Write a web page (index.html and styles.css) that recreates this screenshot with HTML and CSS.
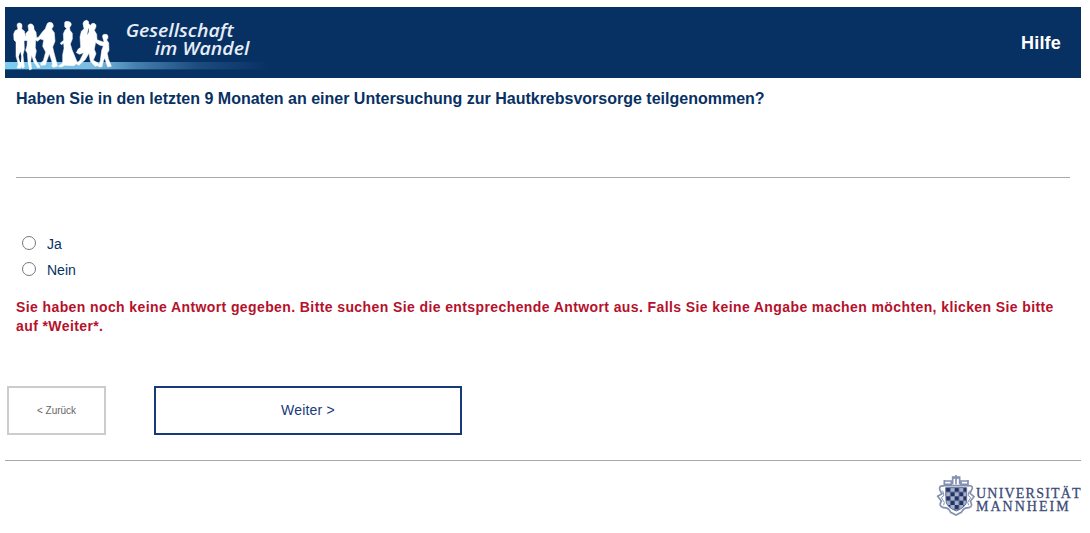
FILE: index.html
```
<!DOCTYPE html>
<html lang="de">
<head>
<meta charset="utf-8">
<title>Gesellschaft im Wandel</title>
<link rel="stylesheet" href="styles.css">
</head>
<body>
<header class="banner">
  <svg class="logo" viewBox="15 21 870 213" role="img" aria-label="Gesellschaft im Wandel">
    <defs>
      <linearGradient id="band" x1="0" x2="1">
        <stop offset="0" stop-color="#7ccdf0"/>
        <stop offset=".34" stop-color="#7abce0"/>
        <stop offset=".5" stop-color="#4480ae"/>
        <stop offset=".73" stop-color="#1c4c80"/>
        <stop offset="1" stop-color="#083163"/>
      </linearGradient>
    </defs>
    <rect x="15" y="186" width="790" height="22" fill="url(#band)"/>
    <g fill="#fff" stroke="#fff" stroke-width="1.5" stroke-linejoin="round">
      <path d="M51 75Q52 68 59 69Q67 70 66 79L65 87L73 93L76 108L84 113L82 122L72 119L73 148L69 164L71 185L73 201L68 205L64 199L61 205L51 203L55 193L48 169L48 126L42 120L41 102L45 92L54 88Z"/>
      <path d="M84 77Q87 70 95 72Q103 76 102 88L108 97L110 113L118 111L122 116L112 124L107 120L106 143L109 153L105 172L111 187L120 202L113 203L101 185L95 166L92 185L95 207L89 210L84 187L82 160L77 151L81 137L82 119L70 123L68 117L78 109L77 101L86 91Z"/>
      <path d="M140 75Q142 66 151 67Q160 68 160 79L155 87L163 98L165 124L158 141L162 158L170 188L172 199L160 202L155 198L158 192L148 161L141 181L136 195L123 196L122 189L130 182L137 156L128 139L131 120L121 117L116 111L127 96L136 86Z"/>
      <path d="M194 72Q192 64 201 64Q212 64 214 72Q214 77 209 82L210 91L217 100L217 117L211 132L216 149L228 178L232 188L222 197L194 196L184 201L175 199L188 189L188 164L192 145L191 130L184 134L181 129L191 121L190 101L195 90L200 86L194 80Z"/>
      <path d="M249 71Q251 61 260 61Q268 63 266 72L272 76Q274 69 281 70Q291 72 287 83L283 91L290 103L291 119L307 125L306 133L287 127L283 148L288 161L280 181L294 189L298 196L285 199L271 184L267 160L255 180L246 187L237 196L226 190L239 182L251 158L239 163L229 158L234 148L242 142L240 111L244 94L252 86Z"/>
      <path d="M308 112Q306 103 314 103Q323 101 324 109Q325 116 320 120L326 128L327 151L322 160L325 176L334 199L323 201L314 174L308 190L306 200L296 201L301 181L305 151L310 138L300 136L288 128L290 121L303 127L312 125Z"/>
    </g>
    <g fill="#083163">
      <path d="M56 170L60 186L63 186L64 168L61 155ZM266 83L266 96L262 106L264 90Z"/>
    </g>
    <g class="logo-text">
      <text x="377" y="110" textLength="324" lengthAdjust="spacingAndGlyphs">Gesellschaft</text>
      <text x="464" y="166" textLength="284" lengthAdjust="spacingAndGlyphs">im Wandel</text>
    </g>
  </svg>
  <a class="help">Hilfe</a>
</header>
<main class="survey">
  <h1 class="question">Haben Sie in den letzten 9 Monaten an einer Untersuchung zur Hautkrebsvorsorge teilgenommen?</h1>
  <div class="answers">
    <label class="answer"><input class="radio" type="radio" name="answer"><span>Ja</span></label>
    <label class="answer"><input class="radio" type="radio" name="answer"><span>Nein</span></label>
  </div>
  <p class="error"><span>Sie haben noch keine Antwort gegeben. Bitte suchen Sie die entsprechende Antwort aus. Falls Sie keine Angabe machen möchten, klicken Sie bitte</span> <span>auf *Weiter*.</span></p>
</main>
<nav class="buttons">
  <button class="button back">&lt; Zurück</button>
  <button class="button next">Weiter &gt;</button>
</nav>
<footer class="footer">
  <svg class="university" viewBox="0 0 480 180" role="img" aria-label="Universität Mannheim">
    <defs>
      <pattern id="checks" x="48" y="68" width="26" height="26" patternUnits="userSpaceOnUse">
        <rect width="26" height="26" fill="#a9b1c8"/>
        <path d="M0 0H13V13H0ZM13 13H26V26H13Z" fill="#203468"/>
      </pattern>
    </defs>
    <path d="M47 68H110V108Q108 127 79 138Q50 127 48 108Z" fill="url(#checks)" stroke="#62709a" stroke-width="3"/>
    <g fill="none" stroke="#8490b1" stroke-width="5">
      <path d="M42 63Q25 60 30 76L36 86L23 94L34 108Q25 124 40 128Q56 127 62 142L78 150L94 142Q102 127 117 128Q130 124 121 109L132 95L120 85L127 70Q128 60 112 63"/>
      <path d="M43 45V58H64V46M68 58V36H89V58M93 46V58H114V45M43 48H62M68 39H89M94 48H114M78 30V58M40 62H116"/>
      <path d="M38 77L42 91L34 98L43 112L41 121M118 77L114 91L122 98L113 112L116 121" stroke-width="3"/>
    </g>
    <g class="university-text">
      <text x="138" y="98" textLength="314">UNIVERSITÄT</text>
      <text x="138" y="137" textLength="278">MANNHEIM</text>
    </g>
  </svg>
</footer>
</body>
</html>
```
FILE: styles.css
```
* { box-sizing: border-box; }
body {
  margin: 0;
  padding: 7px 9px 0 5px;
  background: #fff;
  color: #083163;
  font-family: "Liberation Sans", Arial, sans-serif;
}
.banner {
  display: flex;
  align-items: center;
  justify-content: space-between;
  height: 71px;
  padding-right: 20px;
  background: #083163;
}
.logo { width: 290px; height: 71px; }
.logo-text {
  fill: #e6edf6;
  font: italic 600 55px "Open Sans", sans-serif;
}
.help { padding-top: 2px; color: #fff; font-size: 18px; font-weight: bold; letter-spacing: 0.2px; }
.survey { padding: 0 11px; }
.question {
  height: 100px;
  margin: 0;
  padding-top: 11px;
  border-bottom: 1px solid #aaa;
  font-size: 16px;
  line-height: 19px;
  white-space: nowrap;
}
.answers { padding: 53px 0 0 6px; }
.answer {
  display: flex;
  align-items: center;
  gap: 11px;
  height: 26px;
  font-size: 14px;
}
.radio {
  appearance: none;
  width: 14px;
  height: 14px;
  margin: 0 0 2px;
  border: 1px solid #777;
  border-radius: 50%;
  background: #fff;
}
.error {
  display: flex;
  flex-direction: column;
  margin: 15px 0 0;
  color: #b5112c;
  font-size: 14px;
  font-weight: bold;
  line-height: 19px;
  letter-spacing: 0.4px;
  white-space: nowrap;
}
.buttons {
  display: flex;
  gap: 48px;
  padding: 50px 0 25px 2px;
  border-bottom: 1px solid #aaa;
}
.button {
  height: 49px;
  padding: 0;
  border: 2px solid;
  background: #fff;
  font-family: inherit;
}
.back { width: 99px; border-color: #ccc; color: #666; font-size: 10px; }
.next { width: 308px; padding-bottom: 2px; border-color: #183a7a; color: #183a7a; font-size: 14px; letter-spacing: 0.2px; }
.footer { display: flex; justify-content: flex-end; padding-top: 4px; }
.university { width: 160px; height: 60px; margin-right: -9px; }
.university-text {
  fill: #3b4a77;
  stroke: #3b4a77;
  stroke-width: 0.8px;
  font: 42px "Liberation Serif", "Times New Roman", serif;
}
```
